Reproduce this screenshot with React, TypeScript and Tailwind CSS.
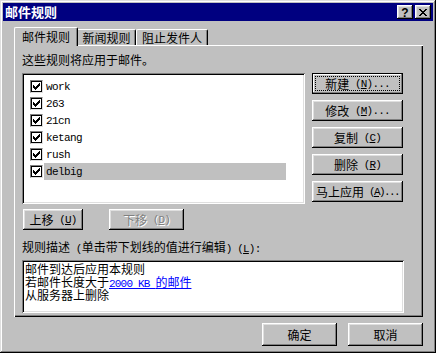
import React from "react";

function Check() {
  return (
    <svg width="7" height="7" viewBox="0 0 7 7" shapeRendering="crispEdges">
      <path d="M0 2h1v3H0zM1 3h1v3H1zM2 4h1v3H2zM3 3h1v3H3zM4 2h1v3H4zM5 1h1v3H5zM6 0h1v3H6z" fill="#000" />
    </svg>
  );
}

function CheckBox() {
  return (
    <div className="w-[13px] h-[13px] shrink-0 bg-white border border-t-[#808080] border-l-[#808080] border-b-[#dfdfdf] border-r-[#dfdfdf] shadow-[inset_1px_1px_#000,inset_-1px_-1px_#000] flex items-center justify-center">
      <Check />
    </div>
  );
}

function M({ children }: { children: React.ReactNode }) {
  return (
    <span className="font-['Liberation_Mono',monospace] text-[11px] leading-[10px] tracking-[-0.8px] whitespace-pre">{children}</span>
  );
}

function MT({ children }: { children: React.ReactNode }) {
  return (
    <span className="font-['Liberation_Mono',monospace] text-[11px] leading-[10px] tracking-[-1.6px] whitespace-pre">{children}</span>
  );
}

function Row({ name, sel }: { name: string; sel?: boolean }) {
  return (
    <div className="h-[17px] flex items-center pl-[6px]">
      <CheckBox />
      <div
        className={
          sel
            ? "ml-[1px] h-[17px] w-[242px] flex items-center pl-[2px] bg-[#c0c0c0]"
            : "ml-[1px] h-[17px] flex items-center pl-[2px]"
        }
      >
        <span className="font-['Liberation_Mono',monospace] text-[11px] leading-[12px] tracking-[-0.6px]">{name}</span>
      </div>
    </div>
  );
}

function SideBtn({ children }: { children: React.ReactNode }) {
  return (
    <div className="w-[91px] h-[21px] bg-[#c0c0c0] shadow-[inset_-1px_-1px_#000,inset_1px_1px_#fff,inset_-2px_-2px_#808080,inset_2px_2px_#dfdfdf] flex items-center justify-center leading-[12px] whitespace-nowrap">
      {children}
    </div>
  );
}

function CloseGlyph() {
  return (
    <svg width="8" height="7" viewBox="0 0 8 7" shapeRendering="crispEdges">
      <path
        d="M0 0h2v1H0zM6 0h2v1H6zM1 1h2v1H1zM5 1h2v1H5zM2 2h4v1H2zM3 3h2v1H3zM2 4h4v1H2zM1 5h2v1H1zM5 5h2v1H5zM0 6h2v1H0zM6 6h2v1H6z"
        fill="#000"
      />
    </svg>
  );
}

export default function App() {
  return (
    <div className="w-[436px] h-[353px] bg-[#c0c0c0] p-[3px] flex flex-col shadow-[inset_-1px_-1px_#000,inset_1px_1px_#dfdfdf,inset_-2px_-2px_#808080,inset_2px_2px_#fff] font-['Noto_Sans_CJK_SC',sans-serif] text-[12px] leading-[12px] text-black">
      {/* Title bar */}
      <div className="h-[18px] bg-[#000080] flex items-center justify-between pl-[2px] pr-[2px] shrink-0">
        <span className="text-white font-bold text-[13px] leading-[14px]">邮件规则</span>
        <div className="flex gap-[2px]">
          <div className="w-[16px] h-[14px] bg-[#c0c0c0] shadow-[inset_-1px_-1px_#000,inset_1px_1px_#fff,inset_-2px_-2px_#808080,inset_2px_2px_#dfdfdf] flex items-center justify-center">
            <span className="font-['Liberation_Sans',sans-serif] font-bold text-[12px] leading-[12px] pt-[1px]">?</span>
          </div>
          <div className="w-[16px] h-[14px] bg-[#c0c0c0] shadow-[inset_-1px_-1px_#000,inset_1px_1px_#fff,inset_-2px_-2px_#808080,inset_2px_2px_#dfdfdf] flex items-center justify-center">
            <CloseGlyph />
          </div>
        </div>
      </div>

      {/* Tabs */}
      <div className="mt-[6px] ml-[11px] h-[18px] flex items-end shrink-0">
        <div className="relative z-10 -mb-[1px] h-[19px] w-[64px] bg-[#c0c0c0] border-t border-l border-r border-t-white border-l-white border-r-black rounded-tl-[2px] rounded-tr-[2px] shadow-[inset_-1px_0_#808080] flex items-center justify-center">
          邮件规则
        </div>
        <div className="h-[16px] w-[58px] bg-[#c0c0c0] border-t border-r border-t-white border-r-black rounded-tr-[2px] shadow-[inset_-1px_0_#808080] flex items-center justify-center pt-[1px]">
          新闻规则
        </div>
        <div className="h-[16px] w-[72px] bg-[#c0c0c0] border-t border-l border-r border-t-white border-l-white border-r-black rounded-tl-[2px] rounded-tr-[2px] shadow-[inset_-1px_0_#808080] flex items-center justify-center pt-[1px]">
          阻止发件人
        </div>
      </div>

      {/* Panel */}
      <div className="ml-[11px] w-[409px] h-[272px] shrink-0 bg-[#c0c0c0] shadow-[inset_1px_1px_#fff,inset_-1px_-1px_#000,inset_-2px_-2px_#808080] pl-[8px] pt-[9px] flex flex-col">
        <div className="h-[12px] leading-[12px]">这些规则将应用于邮件。</div>

        <div className="mt-[7px] flex">
          <div className="w-[283px] h-[131px] bg-white shadow-[inset_1px_1px_#808080,inset_-1px_-1px_#fff,inset_2px_2px_#000,inset_-2px_-2px_#dfdfdf] pt-[5px] pl-[2px] flex flex-col">
            <Row name="work" />
            <Row name="263" />
            <Row name="21cn" />
            <Row name="ketang" />
            <Row name="rush" />
            <Row name="delbig" sel />
          </div>
          <div className="ml-[7px] flex flex-col gap-[6px]">
            <div className="w-[91px] h-[21px] border border-black bg-[#c0c0c0]">
              <div className="w-full h-full shadow-[inset_-1px_-1px_#808080,inset_1px_1px_#fff] p-[2px]">
                <div className="w-full h-full border border-dotted border-black flex items-center justify-center leading-[12px] whitespace-nowrap">
                  新建<M> (<u>N</u>)...</M>
                </div>
              </div>
            </div>
            <SideBtn>
              修改<M> (<u>M</u>)...</M>
            </SideBtn>
            <SideBtn>
              复制<M> (<u>C</u>)</M>
            </SideBtn>
            <SideBtn>
              删除<M> (<u>R</u>)</M>
            </SideBtn>
            <SideBtn>
              马上应用<MT> (<u>A</u>)...</MT>
            </SideBtn>
          </div>
        </div>

        <div className="mt-[5px] flex">
          <div className="ml-[1px] w-[60px] h-[21px] bg-[#c0c0c0] shadow-[inset_-1px_-1px_#000,inset_1px_1px_#fff,inset_-2px_-2px_#808080,inset_2px_2px_#dfdfdf] flex items-center justify-center leading-[12px] whitespace-nowrap">
            上移<M> (<u>U</u>)</M>
          </div>
          <div className="ml-[26px] w-[75px] h-[21px] bg-[#c0c0c0] shadow-[inset_-1px_-1px_#000,inset_1px_1px_#fff,inset_-2px_-2px_#808080,inset_2px_2px_#dfdfdf] flex items-center justify-center leading-[12px] whitespace-nowrap text-[#808080] [text-shadow:1px_1px_0_#fff]">
            下移<M> (<u>D</u>)</M>
          </div>
        </div>

        <div className="mt-[11px] h-[12px] leading-[12px] whitespace-nowrap">
          规则描述<M> (</M>单击带下划线的值进行编辑<M>) (<u>L</u>):</M>
        </div>

        <div className="mt-[7px] w-[382px] h-[53px] bg-white shadow-[inset_1px_1px_#808080,inset_-1px_-1px_#fff,inset_2px_2px_#000,inset_-2px_-2px_#dfdfdf] pt-[3px] pl-[3px] flex flex-col">
          <div className="h-[13px] leading-[12px] whitespace-nowrap">邮件到达后应用本规则</div>
          <div className="h-[13px] leading-[12px] whitespace-nowrap">
            若邮件长度大于<span className="text-[#0000ff] underline"><M>2000 KB </M>的邮件</span>
          </div>
          <div className="h-[13px] leading-[12px] whitespace-nowrap">从服务器上删除</div>
        </div>
      </div>

      {/* Bottom buttons */}
      <div className="mt-[6px] mr-[10px] flex justify-end gap-[11px] shrink-0">
        <div className="w-[75px] h-[23px] bg-[#c0c0c0] shadow-[inset_-1px_-1px_#000,inset_1px_1px_#fff,inset_-2px_-2px_#808080,inset_2px_2px_#dfdfdf] flex items-center justify-center leading-[12px]">
          确定
        </div>
        <div className="w-[75px] h-[23px] bg-[#c0c0c0] shadow-[inset_-1px_-1px_#000,inset_1px_1px_#fff,inset_-2px_-2px_#808080,inset_2px_2px_#dfdfdf] flex items-center justify-center leading-[12px]">
          取消
        </div>
      </div>
    </div>
  );
}
